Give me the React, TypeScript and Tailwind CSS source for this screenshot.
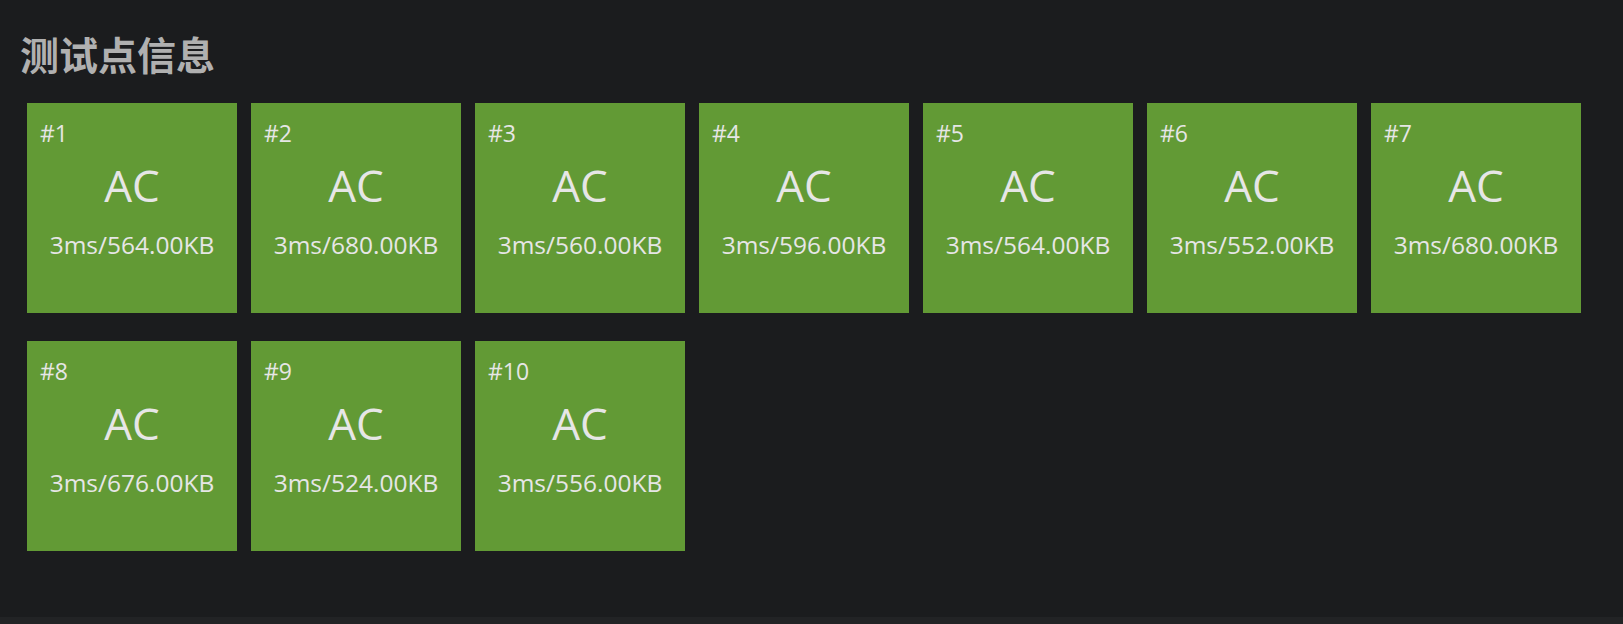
import React from "react";

const cases = [
  { id: 1, time: "3ms", mem: "564.00KB" },
  { id: 2, time: "3ms", mem: "680.00KB" },
  { id: 3, time: "3ms", mem: "560.00KB" },
  { id: 4, time: "3ms", mem: "596.00KB" },
  { id: 5, time: "3ms", mem: "564.00KB" },
  { id: 6, time: "3ms", mem: "552.00KB" },
  { id: 7, time: "3ms", mem: "680.00KB" },
  { id: 8, time: "3ms", mem: "676.00KB" },
  { id: 9, time: "3ms", mem: "524.00KB" },
  { id: 10, time: "3ms", mem: "556.00KB" },
];

const App = () => {
  return (
    <div className="flex h-screen flex-col bg-[#1b1c1e] font-['Open_Sans','Noto_Sans_CJK_SC',sans-serif]">
      <div className="flex-1 pl-[20px] pt-[26px]">
        <h2 className="text-[39px] font-bold leading-[54px] text-[#b0b0b0] font-['Noto_Sans_CJK_SC',sans-serif]">
          测试点信息
        </h2>
        <div className="ml-[7px] mt-[23px] flex flex-wrap gap-x-[14px] gap-y-[28px]">
          {cases.map((c) => (
            <div
              key={c.id}
              className="flex h-[210px] w-[210px] flex-col bg-[#629a35] text-[#e6e6e6]"
            >
              <div className="pl-[13px] pt-[19px] text-[23px] leading-[23px]">
                #{c.id}
              </div>
              <div className="mt-[18px] text-center text-[44px] leading-[44px]">
                AC
              </div>
              <div className="mt-[26px] text-center text-[24.5px] leading-[24px]">
                {c.time}/{c.mem}
              </div>
            </div>
          ))}
        </div>
      </div>
      <div className="h-[7px] bg-[#222325]" />
    </div>
  );
};

export default App;
